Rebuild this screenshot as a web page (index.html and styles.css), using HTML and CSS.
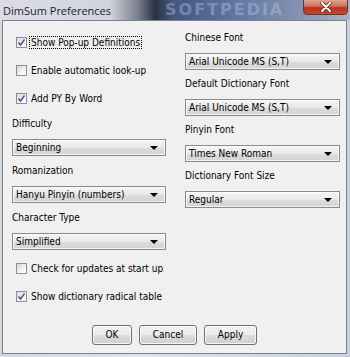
FILE: index.html
```html
<!DOCTYPE html>
<html lang="en">
<head>
    <meta charset="UTF-8" />
    <title>DimSum Preferences</title>
    <link rel="stylesheet" href="styles.css">
</head>
<body>
    <div class="window">
        <div class="titlebar">
            <span class="title">DimSum Preferences</span>
            <span class="watermark">SOFTPEDIA</span>
            <div class="close">
                <svg width="14" height="10" viewBox="0 0 14 10">
                    <path d="M3 1 L11 9 M11 1 L3 9" stroke="#5a2018" stroke-width="3.4" stroke-linecap="round"/>
                    <path d="M3 1 L11 9 M11 1 L3 9" stroke="#ffffff" stroke-width="2" stroke-linecap="round"/>
                </svg>
            </div>
        </div>
        <div class="client">
            <div class="columns">
                <div class="col col-left">
                    <div class="check">
                        <span class="box"><svg width="9" height="9" viewBox="0 0 9 9"><path d="M1.5 4.5 L3.5 7 L7.5 1.5" fill="none" stroke="#3b5494" stroke-width="1.4"/></svg></span>
                        <span class="focus">Show Pop-up Definitions</span>
                    </div>
                    <div class="check">
                        <span class="box"></span>
                        <span>Enable automatic look-up</span>
                    </div>
                    <div class="check">
                        <span class="box"><svg width="9" height="9" viewBox="0 0 9 9"><path d="M1.5 4.5 L3.5 7 L7.5 1.5" fill="none" stroke="#3b5494" stroke-width="1.4"/></svg></span>
                        <span>Add PY By Word</span>
                    </div>
                    <div class="field first">
                        <div class="label">Difficulty</div>
                        <div class="combo">Beginning</div>
                    </div>
                    <div class="field">
                        <div class="label">Romanization</div>
                        <div class="combo">Hanyu Pinyin (numbers)</div>
                    </div>
                    <div class="field">
                        <div class="label">Character Type</div>
                        <div class="combo">Simplified</div>
                    </div>
                    <div class="check after">
                        <span class="box"></span>
                        <span>Check for updates at start up</span>
                    </div>
                    <div class="check">
                        <span class="box"><svg width="9" height="9" viewBox="0 0 9 9"><path d="M1.5 4.5 L3.5 7 L7.5 1.5" fill="none" stroke="#3b5494" stroke-width="1.4"/></svg></span>
                        <span>Show dictionary radical table</span>
                    </div>
                </div>
                <div class="col col-right">
                    <div class="field">
                        <div class="label">Chinese Font</div>
                        <div class="combo">Arial Unicode MS (S,T)</div>
                    </div>
                    <div class="field">
                        <div class="label">Default Dictionary Font</div>
                        <div class="combo">Arial Unicode MS (S,T)</div>
                    </div>
                    <div class="field">
                        <div class="label">Pinyin Font</div>
                        <div class="combo">Times New Roman</div>
                    </div>
                    <div class="field">
                        <div class="label">Dictionary Font Size</div>
                        <div class="combo">Regular</div>
                    </div>
                </div>
            </div>
            <div class="buttons">
                <div class="btn btn-ok">OK</div>
                <div class="btn btn-cancel">Cancel</div>
                <div class="btn btn-apply">Apply</div>
            </div>
        </div>
    </div>
</body>
</html>
```

FILE: styles.css
```css
body {
    margin: 0;
    font-family: "DejaVu Sans Condensed", "DejaVu Sans", sans-serif;
    font-stretch: condensed;
    font-size: 10px;
    color: #000;
}

.window {
    width: 350px;
    height: 357px;
    box-sizing: border-box;
    padding: 0 3px 3px 2px;
    display: flex;
    flex-direction: column;
    background: linear-gradient(to right, #d3d8e0, #dfe2e8 40%, #c9d0dc 100%);
    overflow: hidden;
}

.titlebar {
    position: relative;
    height: 20px;
    margin: 0 -3px 0 -2px;
    background: linear-gradient(to right, #dcdde4 0, #d2d4dc 110px, #7a7f8e 138px, #2b3143 155px, #42557e 172px, #6479a3 240px, #8190b0 295px, #aab2c4 350px);
    overflow: hidden;
}

.title {
    position: absolute;
    left: 3px;
    top: 3px;
    font-family: "Open Sans", "DejaVu Sans", sans-serif;
    font-stretch: normal;
    font-size: 11px;
    color: #1c1a34;
}

.watermark {
    position: absolute;
    left: 165px;
    top: 1px;
    font-family: "DejaVu Sans", sans-serif;
    font-stretch: normal;
    font-weight: bold;
    font-size: 16px;
    line-height: 18px;
    letter-spacing: 2px;
    color: rgba(190, 205, 235, 0.4);
}

.close {
    position: absolute;
    left: 303px;
    top: -1px;
    width: 43px;
    height: 14px;
    border: 1px solid #5b3a3a;
    border-radius: 0 0 4px 4px;
    background: linear-gradient(#e3a395 0, #d0705c 45%, #b6341f 55%, #c44a30 100%);
    display: flex;
    align-items: center;
    justify-content: center;
}

.client {
    flex: 1;
    border: 1px solid #7e8289;
    background: #f0f0f0;
}

.columns {
    display: flex;
}

.col-left {
    width: 154px;
    margin-left: 9px;
    padding-top: 7px;
}

.col-right {
    width: 155px;
    margin-left: 19px;
    padding-top: 3px;
}

.check {
    height: 28px;
    padding-left: 4px;
    display: flex;
    align-items: center;
    gap: 4px;
    white-space: nowrap;
}

.check.after {
    margin-top: 4px;
}

.box {
    width: 9px;
    height: 9px;
    border: 1px solid #8e8f8f;
    background: linear-gradient(135deg, #d8d8d8, #f4f4f4 60%, #ffffff);
    display: flex;
    align-items: center;
    justify-content: center;
    flex-shrink: 0;
}

.focus {
    outline: 1px dotted #000;
    outline-offset: 0;
    padding: 0 1px;
    margin-left: -1px;
}

.label {
    height: 14px;
    line-height: 14px;
}

.field {
    margin-top: 7px;
}

.col-left .field {
    margin-top: 8px;
}

.col-left .field.first {
    margin-top: 5px;
}

.combo {
    position: relative;
    margin-top: 8px;
    height: 15px;
    line-height: 15px;
    padding-left: 3px;
    border: 1px solid #8a8a8a;
    background: linear-gradient(#f5f5f5, #e9e9e9 50%, #dcdcdc 51%, #d4d4d4);
    box-shadow: inset 0 0 0 1px rgba(255, 255, 255, 0.7);
    white-space: nowrap;
}

.combo::after {
    content: "";
    position: absolute;
    right: 7px;
    top: 6px;
    border-left: 4px solid transparent;
    border-right: 4px solid transparent;
    border-top: 4px solid #000;
}

.buttons {
    display: flex;
    justify-content: center;
    gap: 7px;
    margin-top: 15px;
}

.btn {
    height: 18px;
    line-height: 18px;
    text-align: center;
    border: 1px solid #707070;
    border-radius: 3px;
    background: linear-gradient(#f2f2f2, #ebebeb 50%, #dddddd 51%, #cfcfcf);
    box-shadow: inset 0 0 0 1px rgba(255, 255, 255, 0.8);
}

.btn-ok {
    width: 38px;
}

.btn-cancel {
    width: 56px;
}

.btn-apply {
    width: 51px;
}
```
